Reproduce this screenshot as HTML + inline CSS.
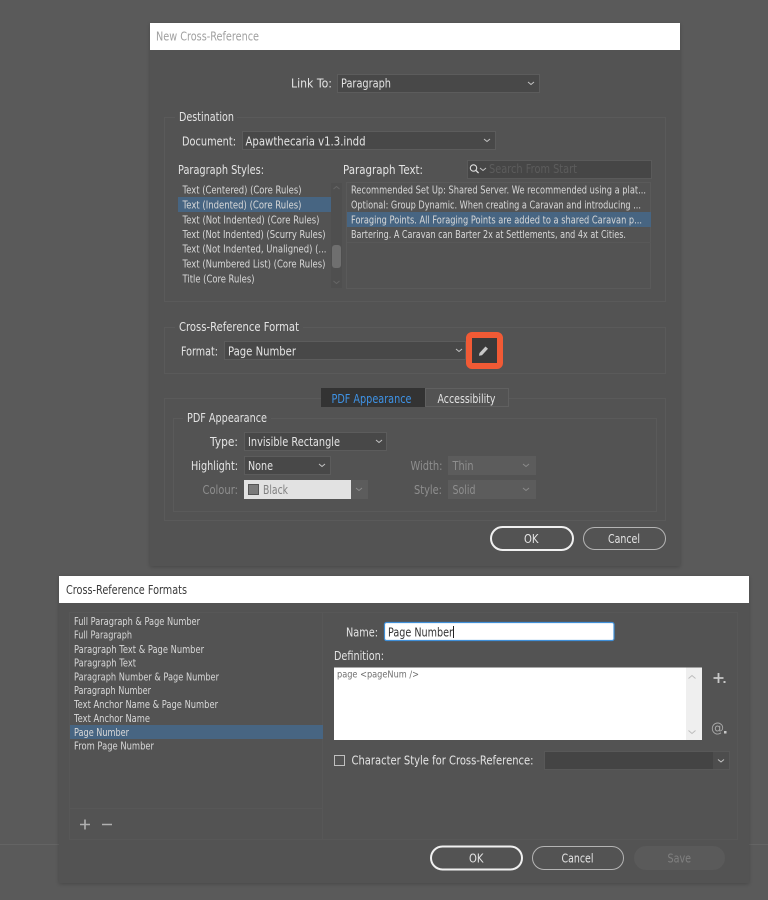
<!DOCTYPE html>
<html><head><meta charset="utf-8"><title>Cross-Reference</title>
<style>
html,body{margin:0;padding:0;background:#5a5a5a;width:768px;height:900px;overflow:hidden}
svg{display:block}
text{font-family:"DejaVu Sans","Liberation Sans",sans-serif;font-size:12px;fill:#e4e4e4;white-space:pre}
.s{font-size:10.8px;fill:#d8d8d8}
.d{fill:#8e8e8e}
.g{fill:none;stroke:#5a5a5a;stroke-width:1}
.f{fill:#484848;stroke:#5c5c5c;stroke-width:1}
.x{fill:#5c5c5c;stroke:#5c5c5c}
.c{fill:none;stroke:#c4c4c4;stroke-width:1}
.cd{fill:none;stroke:#8a8a8a;stroke-width:1}
</style></head><body>
<svg width="768" height="900" viewBox="0 0 768 900" xmlns="http://www.w3.org/2000/svg">
<defs><filter id="sh" x="-5%" y="-5%" width="110%" height="110%"><feDropShadow dx="0" dy="1" stdDeviation="2" flood-color="#000" flood-opacity=".22"/></filter></defs>
<rect width="768" height="900" fill="#5a5a5a"/>
<rect x="0" y="844" width="768" height="1" fill="#646464"/>

<!-- Dialog 1 -->
<rect x="150" y="23" width="530" height="543" fill="#535353" filter="url(#sh)"/>
<rect x="150" y="23" width="530" height="27" fill="#fff"/>
<text x="156" y="40.5" textLength="103" lengthAdjust="spacingAndGlyphs" style="fill:#a0a0a0">New Cross-Reference</text>

<text x="291" y="87.5" textLength="41" lengthAdjust="spacingAndGlyphs">Link To:</text>
<rect class="f" x="337.500" y="74.500" width="202" height="18"/>
<text x="341" y="87.500" textLength="50" lengthAdjust="spacingAndGlyphs">Paragraph</text>
<path class="c" d="M528 82l3 2.500 3-2.500"/>

<rect class="g" x="164.500" y="117.500" width="501" height="184"/>
<rect x="175" y="112" width="62" height="10" fill="#535353"/>
<text x="179" y="121" textLength="55" lengthAdjust="spacingAndGlyphs">Destination</text>
<text x="182" y="145.500" textLength="54" lengthAdjust="spacingAndGlyphs">Document:</text>
<rect class="f" x="242.500" y="131.500" width="253" height="18"/>
<text x="245.500" y="145.500" textLength="120" lengthAdjust="spacingAndGlyphs">Apawthecaria v1.3.indd</text>
<path class="c" d="M484 139l3 2.500 3-2.500"/>

<text x="178" y="174" textLength="86" lengthAdjust="spacingAndGlyphs">Paragraph Styles:</text>
<text x="343" y="174" textLength="80" lengthAdjust="spacingAndGlyphs">Paragraph Text:</text>
<rect x="467.500" y="160.500" width="184" height="18" fill="#464646" stroke="#5a5a5a"/>
<circle cx="473.500" cy="168" r="3.200" fill="none" stroke="#ddd" stroke-width="1.100"/>
<path d="M476 170.500l2.600 2.600" stroke="#ddd" stroke-width="1.300"/>
<path class="c" d="M480 168l3 2.500 3-2.500"/>
<text x="489" y="173" textLength="88" lengthAdjust="spacingAndGlyphs" style="fill:#5c5c5c">Search From Start</text>

<rect x="331" y="183" width="11" height="105" fill="#4f4f4f"/>
<rect x="332" y="245" width="9" height="23" rx="3" fill="#6f6f6f"/>
<path class="cd" d="M333.500 189l3-2.500 3 2.500M333.500 281l3 2.500 3-2.500" style="stroke:#666"/>
<rect x="178" y="197" width="153" height="15" fill="#476582"/>
<text class="s" x="182.500" y="193.500" textLength="119" lengthAdjust="spacingAndGlyphs">Text (Centered) (Core Rules)</text>
<text class="s" x="182.500" y="208.500" textLength="119" lengthAdjust="spacingAndGlyphs">Text (Indented) (Core Rules)</text>
<text class="s" x="182.500" y="223.500" textLength="137" lengthAdjust="spacingAndGlyphs">Text (Not Indented) (Core Rules)</text>
<text class="s" x="182.500" y="238" textLength="143" lengthAdjust="spacingAndGlyphs">Text (Not Indented) (Scurry Rules)</text>
<text class="s" x="182.500" y="252.500" textLength="144" lengthAdjust="spacingAndGlyphs">Text (Not Indented, Unaligned) (...</text>
<text class="s" x="182.500" y="267.500" textLength="143" lengthAdjust="spacingAndGlyphs">Text (Numbered List) (Core Rules)</text>
<text class="s" x="182.500" y="282.500" textLength="72" lengthAdjust="spacingAndGlyphs">Title (Core Rules)</text>

<rect class="g" x="346.500" y="182.500" width="304" height="106"/>
<rect x="347" y="212" width="304" height="15" fill="#476582"/>
<rect x="347" y="242" width="304" height="1" fill="#585858"/>
<text class="s" x="351" y="193.500" textLength="295" lengthAdjust="spacingAndGlyphs">Recommended Set Up: Shared Server. We recommended using a plat...</text>
<text class="s" x="351" y="208.500" textLength="290" lengthAdjust="spacingAndGlyphs">Optional: Group Dynamic. When creating a Caravan and introducing ...</text>
<text class="s" x="351" y="223.500" textLength="291" lengthAdjust="spacingAndGlyphs">Foraging Points. All Foraging Points are added to a shared Caravan p...</text>
<text class="s" x="351" y="238" textLength="275" lengthAdjust="spacingAndGlyphs">Bartering. A Caravan can Barter 2x at Settlements, and 4x at Cities.</text>

<rect class="g" x="164.500" y="327.500" width="501" height="46"/>
<rect x="175" y="322" width="128" height="10" fill="#535353"/>
<text x="179" y="331" textLength="120" lengthAdjust="spacingAndGlyphs">Cross-Reference Format</text>
<text x="181" y="355.500" textLength="37" lengthAdjust="spacingAndGlyphs">Format:</text>
<rect class="f" x="224.500" y="341.500" width="241" height="18"/>
<text x="228" y="355.500" textLength="68" lengthAdjust="spacingAndGlyphs">Page Number</text>
<path class="c" d="M456 349l3 2.500 3-2.500"/>
<rect x="469" y="335" width="31" height="31" rx="3" fill="#3a3a3a" stroke="#f15a35" stroke-width="6"/>
<path d="M479.500 353l6-6.500 2.500 2.200-6 6.500-3 .6z" fill="#c8c8c8"/>

<rect class="g" x="164.500" y="398.500" width="501" height="122"/>
<rect x="321" y="388" width="104" height="19" fill="#333"/>
<rect x="425.500" y="388.500" width="83" height="18" fill="#535353" stroke="#606060"/>
<text x="331.500" y="403" textLength="80" lengthAdjust="spacingAndGlyphs" style="fill:#3f93e6">PDF Appearance</text>
<text x="437.500" y="403" textLength="58" lengthAdjust="spacingAndGlyphs">Accessibility</text>
<rect class="g" x="173.500" y="418.500" width="483" height="93"/>
<rect x="183" y="413" width="88" height="10" fill="#535353"/>
<text x="187" y="422" textLength="80" lengthAdjust="spacingAndGlyphs">PDF Appearance</text>

<text x="210" y="446" textLength="28" lengthAdjust="spacingAndGlyphs">Type:</text>
<rect class="f" x="244.500" y="432.500" width="142" height="18"/>
<text x="248" y="446" textLength="92" lengthAdjust="spacingAndGlyphs">Invisible Rectangle</text>
<path class="c" d="M376 440l3 2.500 3-2.500"/>
<text x="191" y="470" textLength="47" lengthAdjust="spacingAndGlyphs">Highlight:</text>
<rect class="f" x="244.500" y="456.500" width="86" height="18"/>
<text x="248" y="470" textLength="25" lengthAdjust="spacingAndGlyphs">None</text>
<path class="c" d="M319 464l3 2.500 3-2.500"/>
<text class="d" x="410.500" y="470" textLength="32" lengthAdjust="spacingAndGlyphs">Width:</text>
<rect class="x" x="448.500" y="456.500" width="87" height="18"/>
<text class="d" x="452.500" y="470" textLength="21" lengthAdjust="spacingAndGlyphs">Thin</text>
<path class="cd" d="M523 464l3 2.500 3-2.500"/>

<text class="d" x="202.500" y="494" textLength="35.500" lengthAdjust="spacingAndGlyphs">Colour:</text>
<rect x="244" y="480" width="107" height="19" fill="#e2e2e2"/>
<rect x="248.500" y="484.500" width="10" height="10" fill="#7b7b7b" stroke="#555"/>
<text x="263" y="494" textLength="25" lengthAdjust="spacingAndGlyphs" style="fill:#808080">Black</text>
<rect x="351" y="480" width="17" height="19" fill="#5c5c5c"/>
<path class="cd" d="M356 488l3 2.500 3-2.500"/>
<text class="d" x="414" y="494" textLength="28" lengthAdjust="spacingAndGlyphs">Style:</text>
<rect class="x" x="448.500" y="480.500" width="87" height="18"/>
<text class="d" x="452.500" y="494" textLength="23" lengthAdjust="spacingAndGlyphs">Solid</text>
<path class="cd" d="M523 488l3 2.500 3-2.500"/>

<rect x="491" y="527" width="82" height="23" rx="11.500" fill="#535353" stroke="#f0f0f0" stroke-width="2"/>
<text x="524" y="543" textLength="14.500" lengthAdjust="spacingAndGlyphs">OK</text>
<rect x="583.500" y="527.500" width="82" height="22" rx="11" fill="#535353" stroke="#b4b4b4"/>
<text x="608" y="543" textLength="32" lengthAdjust="spacingAndGlyphs">Cancel</text>

<!-- Dialog 2 -->
<rect x="59" y="576" width="690" height="307" fill="#535353" filter="url(#sh)"/>
<rect x="59" y="576" width="690" height="27" fill="#fff"/>
<text x="66" y="594" textLength="121" lengthAdjust="spacingAndGlyphs" style="fill:#3a3a3a">Cross-Reference Formats</text>

<rect class="g" x="69.500" y="612.500" width="668" height="227" style="stroke:#575757"/>
<path d="M322.500 613v226M70 808.500h252" stroke="#575757" fill="none"/>
<rect x="70" y="725" width="253" height="14" fill="#476582"/>
<text class="s" x="74" y="625" textLength="126" lengthAdjust="spacingAndGlyphs">Full Paragraph &amp; Page Number</text>
<text class="s" x="74" y="638.500" textLength="58" lengthAdjust="spacingAndGlyphs">Full Paragraph</text>
<text class="s" x="74" y="653" textLength="130" lengthAdjust="spacingAndGlyphs">Paragraph Text &amp; Page Number</text>
<text class="s" x="74" y="666.500" textLength="62" lengthAdjust="spacingAndGlyphs">Paragraph Text</text>
<text class="s" x="74" y="680.500" textLength="145" lengthAdjust="spacingAndGlyphs">Paragraph Number &amp; Page Number</text>
<text class="s" x="74" y="694" textLength="77" lengthAdjust="spacingAndGlyphs">Paragraph Number</text>
<text class="s" x="74" y="708" textLength="144" lengthAdjust="spacingAndGlyphs">Text Anchor Name &amp; Page Number</text>
<text class="s" x="74" y="722" textLength="76" lengthAdjust="spacingAndGlyphs">Text Anchor Name</text>
<text class="s" x="74" y="736" textLength="55" lengthAdjust="spacingAndGlyphs">Page Number</text>
<text class="s" x="74" y="749.500" textLength="80" lengthAdjust="spacingAndGlyphs">From Page Number</text>
<path d="M80 824.500h10M85 819.500v10M102 824.500h10" stroke="#b0b0b0" stroke-width="1.600" fill="none"/>

<text x="346" y="636.500" textLength="32" lengthAdjust="spacingAndGlyphs">Name:</text>
<rect x="384.500" y="622.500" width="229.500" height="18" rx="2" fill="#fff" stroke="#3f8fd8" stroke-width="1.200"/>
<text x="388" y="636.500" textLength="65" lengthAdjust="spacingAndGlyphs" style="fill:#333">Page Number</text>
<path d="M453.500 626v12" stroke="#222"/>
<text x="334" y="660" textLength="50" lengthAdjust="spacingAndGlyphs">Definition:</text>
<rect x="334" y="667.500" width="368" height="72.500" fill="#fff"/>
<rect x="686" y="667.500" width="16" height="72.500" fill="#efefef"/>
<path d="M688.500 678.500l3.500-3 3.500 3M688.500 730.500l3.500 3 3.500-3" fill="none" stroke="#bdbdbd"/>
<text x="337" y="677.500" textLength="82" lengthAdjust="spacingAndGlyphs" style="font-size:9.500px;fill:#6f6f6f">page &lt;pageNum /&gt;</text>
<path d="M713.500 678h10M718.500 673v10" stroke="#c8c8c8" stroke-width="1.800" fill="none"/>
<rect x="723.500" y="681" width="2" height="2" fill="#c8c8c8"/>
<text x="711" y="732" style="font-size:13px;fill:#a8a8a8">@</text>
<rect x="724" y="731" width="2.500" height="2.500" fill="#c8c8c8"/>
<rect x="334.500" y="755.500" width="10" height="10" fill="none" stroke="#c0c0c0"/>
<text x="351.500" y="764.500" textLength="182" lengthAdjust="spacingAndGlyphs">Character Style for Cross-Reference:</text>
<rect x="544.500" y="751.500" width="185" height="18" fill="#444" stroke="#585858"/>
<rect x="713" y="752" width="16" height="17" fill="#4d4d4d"/>
<path class="c" d="M718 759.500l3 2.500 3-2.500"/>

<rect x="431" y="846.500" width="91" height="23" rx="11.500" fill="#535353" stroke="#f0f0f0" stroke-width="2"/>
<text x="469" y="862.500" textLength="14.500" lengthAdjust="spacingAndGlyphs">OK</text>
<rect x="532.500" y="846.500" width="91" height="23" rx="11.500" fill="#535353" stroke="#b4b4b4"/>
<text x="561.500" y="862.500" textLength="32" lengthAdjust="spacingAndGlyphs">Cancel</text>
<rect x="634" y="846" width="91" height="24" rx="12" fill="#5a5a5a"/>
<text x="667.500" y="862.500" textLength="23.500" lengthAdjust="spacingAndGlyphs" style="fill:#808080">Save</text>
</svg>
</body></html>
